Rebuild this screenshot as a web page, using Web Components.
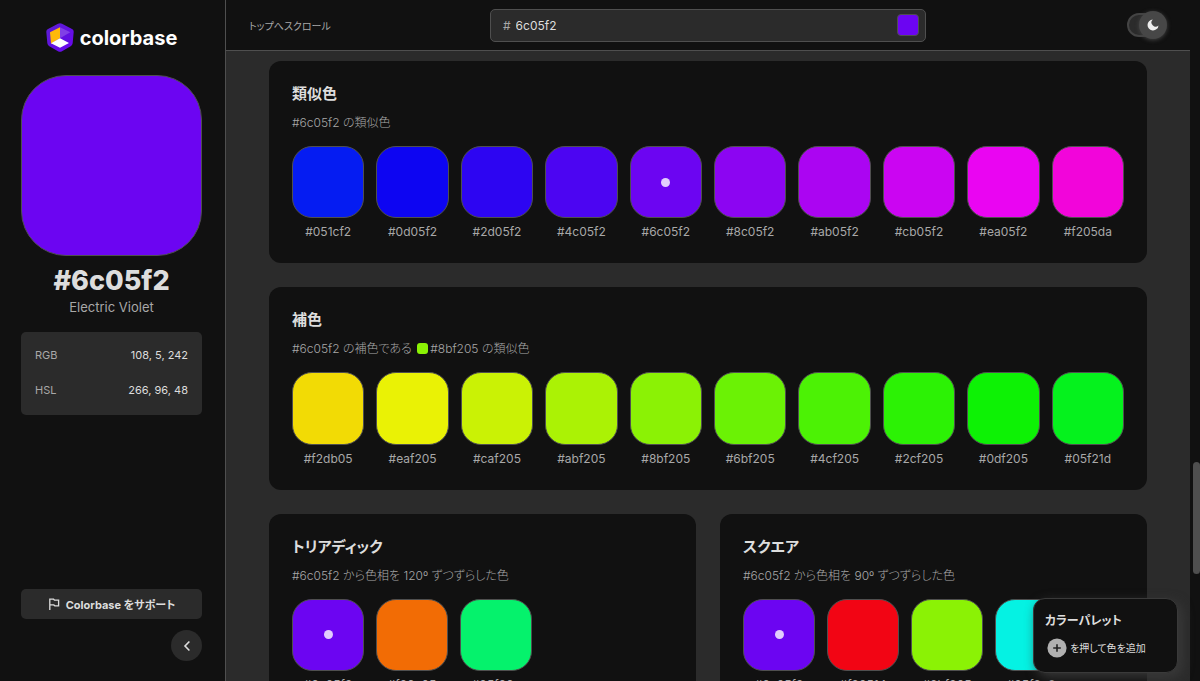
<!DOCTYPE html>
<html lang="ja">
<head>
<meta charset="utf-8">
<meta name="viewport" content="width=device-width, initial-scale=1">
<title>#6c05f2 | Colorbase</title>
<style>
  :root {
    --ink: #111111;
    --panel: #2b2b2b;
    --line: #4f4f4f;
    --text: #dddddd;
    --muted: #a8a8a8;
  }
  body {
    margin: 0;
    background: var(--ink);
    color: var(--text);
    font-family: Inter, "Noto Sans CJK JP", sans-serif;
    font-size: 12px;
    font-feature-settings: "palt";
  }
</style>
</head>
<body>
<cb-app>
  <cb-sidebar slot="sidebar" hex="#6c05f2" name="Electric Violet" rgb="108, 5, 242" hsl="266, 96, 48"></cb-sidebar>
  <cb-header slot="header" value="6c05f2"></cb-header>
  <cb-card wide heading="類似色">
    <span slot="note">#6c05f2 の類似色</span>
    <cb-swatches columns="10" current="#6c05f2" colors="#051cf2 #0d05f2 #2d05f2 #4c05f2 #6c05f2 #8c05f2 #ab05f2 #cb05f2 #ea05f2 #f205da"></cb-swatches>
  </cb-card>
  <cb-card wide heading="補色">
    <span slot="note">#6c05f2 の補色である <cb-chip color="#8bf205"></cb-chip>#8bf205 の類似色</span>
    <cb-swatches columns="10" colors="#f2db05 #eaf205 #caf205 #abf205 #8bf205 #6bf205 #4cf205 #2cf205 #0df205 #05f21d"></cb-swatches>
  </cb-card>
  <cb-card heading="トリアディック">
    <span slot="note">#6c05f2 から色相を 120º ずつずらした色</span>
    <cb-swatches current="#6c05f2" colors="#6c05f2 #f26c05 #05f26c"></cb-swatches>
  </cb-card>
  <cb-card heading="スクエア">
    <span slot="note">#6c05f2 から色相を 90º ずつずらした色</span>
    <cb-swatches current="#6c05f2" colors="#6c05f2 #f20514 #8bf205 #05f2e3"></cb-swatches>
  </cb-card>
  <cb-palette slot="palette"></cb-palette>
</cb-app>

<script>
const define = (tag, render) => customElements.define(tag, class extends HTMLElement {
  connectedCallback() {
    if (this.shadowRoot) return;
    this.attachShadow({ mode: "open" }).innerHTML = render(this);
  }
});

define("cb-app", () => `
  <style>
    :host { display: grid; grid-template-columns: 226px minmax(0, 1fr) 10px; height: 100vh; overflow: hidden; position: relative; }
    .page { display: grid; grid-template-rows: auto minmax(0, 1fr); min-height: 0; background: var(--panel); }
    main { overflow: hidden; padding: 10px 43px; display: grid; grid-template-columns: 1fr 1fr; gap: 24px; align-content: start; }
    .track { display: grid; grid-template-rows: 462fr 112fr 107fr; padding-left: 3px; }
    .thumb { grid-row: 2; background: var(--line); border-radius: 4px; }
    .float { position: absolute; right: 22px; bottom: 8px; }
  </style>
  <slot name="sidebar"></slot>
  <div class="page"><slot name="header"></slot><main><slot></slot></main></div>
  <div class="track"><div class="thumb"></div></div>
  <div class="float"><slot name="palette"></slot></div>`);

define("cb-logo", () => `
  <style>
    :host { display: block; }
    a { display: flex; align-items: center; justify-content: center; gap: 6px; color: #fff; text-decoration: none; font-size: 20px; line-height: 28px; font-weight: 700; }
    svg { width: 28px; height: 29px; }
  </style>
  <a href="#"><svg viewBox="0 0 84 87" aria-hidden="true">
    <defs><linearGradient id="g" x1="0" y1="0" x2="1" y2="1"><stop offset="0" stop-color="#5a1fd0"/><stop offset="1" stop-color="#6c05f2"/></linearGradient></defs>
    <path d="M36 2Q42-1 48 2L78 18Q84 21 83 28L80 61Q79 67 74 70L48 85Q42 88 36 85L10 70Q5 67 4 61L1 28Q0 21 6 18Z" fill="url(#g)"/>
    <path d="M42 13L73 28L70 60L42 46Z" fill="#6010e2"/>
    <path d="M42 13L73 28L42 46Z" fill="#8040e6"/>
    <path d="M42 13L12 28L15 62L42 46Z" fill="#ffb90a"/>
    <path d="M42 46L69 60L42 74L15 61Z" fill="#fff"/>
  </svg><span>colorbase</span></a>`);

define("cb-sidebar", el => `
  <style>
    :host { display: flex; flex-direction: column; box-sizing: border-box; padding: 23px 23px 20px 21px; border-right: 1px solid var(--line); background: var(--ink); }
    .hero { margin-top: 23px; aspect-ratio: 1; box-sizing: border-box; border: 1px solid var(--line); border-radius: 45px; }
    h1 { margin: 8px 0 0; font-size: 27px; line-height: 34px; font-weight: 800; text-align: center; }
    p { margin: 0; font-size: 13px; line-height: 18px; text-align: center; color: var(--muted); }
    dl { margin: 16px 0 0; padding: 6px 14px 7px; background: var(--panel); border-radius: 5px; }
    dl div { display: flex; justify-content: space-between; font-size: 11px; line-height: 35px; }
    dt { color: var(--muted); }
    dd { margin: 0; }
    .bottom { margin-top: auto; display: flex; flex-direction: column; gap: 11px; align-items: flex-end; }
    .support { display: flex; align-items: center; justify-content: center; gap: 6px; align-self: stretch; height: 30px; background: var(--panel); border-radius: 5px; color: var(--text); font-size: 11px; font-weight: 700; text-decoration: none; }
    .support svg { width: 12px; height: 12px; }
    button { display: grid; place-items: center; width: 31px; height: 31px; padding: 0; border: 0; border-radius: 50%; background: var(--panel); color: var(--text); }
    button svg { width: 10px; height: 12px; }
  </style>
  <cb-logo></cb-logo>
  <div class="hero" style="background:${el.getAttribute("hex")}"></div>
  <h1>${el.getAttribute("hex")}</h1>
  <p>${el.getAttribute("name")}</p>
  <dl>
    <div><dt>RGB</dt><dd>${el.getAttribute("rgb")}</dd></div>
    <div><dt>HSL</dt><dd>${el.getAttribute("hsl")}</dd></div>
  </dl>
  <div class="bottom">
    <a class="support" href="#"><svg viewBox="0 0 12 12" fill="none" stroke="currentColor" stroke-width="1.3" aria-hidden="true"><path d="M1.8 12V1.2H5.6L6.5 2.2H10.6V7.8H6.8L5.8 6.9H1.8"/></svg><span>Colorbase をサポート</span></a>
    <button type="button" aria-label="閉じる"><svg viewBox="0 0 10 12" fill="none" stroke="currentColor" stroke-width="1.6" aria-hidden="true"><path d="M7.4 1.5L3 6L7.4 10.5"/></svg></button>
  </div>`);

define("cb-header", el => `
  <style>
    :host { display: grid; grid-template-columns: 1fr minmax(0, 436px) 1fr; align-items: center; height: 50px; padding: 0 23px; background: var(--ink); border-bottom: 1px solid var(--line); }
    .top { color: var(--muted); font-size: 10px; text-decoration: none; }
    .search { display: flex; align-items: center; gap: 5px; box-sizing: border-box; height: 33px; padding: 0 6px 0 12px; background: var(--panel); border: 1px solid var(--line); border-radius: 5px; }
    .search label { color: var(--muted); }
    .search input { flex: 1; min-width: 0; padding: 0; border: 0; outline: 0; background: none; color: var(--text); font: inherit; }
    .search button { width: 22px; height: 22px; padding: 0; border: 1px solid var(--line); border-radius: 4px; background: #${el.getAttribute("value")}; }
    .theme { justify-self: end; position: relative; width: 40px; height: 28px; display: flex; align-items: center; }
    .theme input { appearance: none; margin: 0; box-sizing: border-box; width: 38px; height: 24px; border: 2px solid #444; border-radius: 12px; background: #2b2b2b; }
    .knob { position: absolute; right: 0; top: 0; width: 28px; height: 28px; border-radius: 50%; background: #474747; box-shadow: 0 1px 4px #444; display: grid; place-items: center; }
    .knob svg { width: 12px; height: 12px; }
  </style>
  <a class="top" href="#">トップへスクロール</a>
  <div class="search">
    <label for="hex">#</label>
    <input id="hex" type="text" value="${el.getAttribute("value")}">
    <button type="button" aria-label="色を選択"></button>
  </div>
  <label class="theme"><input type="checkbox" checked aria-label="ダークモード">
    <span class="knob"><svg viewBox="0 0 12 12" aria-hidden="true"><path d="M5.8 .5A5.5 5.5 0 1 0 11.5 6.4A3.3 3.3 0 0 1 5.8 .5Z" fill="#eee"/></svg></span>
  </label>`);

define("cb-card", el => `
  <style>
    :host { display: block; padding: 23px 23px 21px; background: var(--ink); border-radius: 12px; }
    :host([wide]) { grid-column: 1 / -1; }
    h2 { margin: 0; font-size: 15px; line-height: 20px; font-weight: 700; }
    p { margin: 9px 0 13px; line-height: 20px; height: 20px; color: var(--muted); font-weight: 300; }
  </style>
  <h2>${el.getAttribute("heading")}</h2>
  <p><slot name="note"></slot></p>
  <slot></slot>`);

define("cb-chip", el => `
  <style>
    :host { display: inline-block; width: 11px; height: 11px; margin: 0 2px; border-radius: 3px; vertical-align: -1px; background: ${el.getAttribute("color")}; }
  </style>`);

define("cb-swatches", el => {
  const columns = el.getAttribute("columns");
  const current = el.getAttribute("current");
  const items = el.getAttribute("colors").split(" ").map(color => `
    <button type="button"><i class="${color === current ? "current" : ""}" style="background:${color}"></i><span>${color}</span></button>`).join("");
  return `
  <style>
    :host { display: grid; gap: 12px; grid-template-columns: ${columns ? `repeat(${columns}, minmax(0, 1fr))` : "repeat(auto-fill, 72px)"}; }
    button { display: block; padding: 0; border: 0; background: none; color: var(--muted); font: inherit; text-align: center; }
    i { display: grid; place-items: center; box-sizing: border-box; aspect-ratio: 1; border: 1px solid var(--line); border-radius: 20px; }
    .current::after { content: ""; width: 9px; height: 9px; border-radius: 50%; background: #e2cdfd; }
    span { display: block; margin-top: 4px; line-height: 20px; }
  </style>${items}`;
});

define("cb-palette", () => `
  <style>
    :host { display: block; box-sizing: border-box; width: 145px; padding: 12px 11px 14px; background: var(--ink); border: 1px solid #3a3a3a; border-radius: 12px; box-shadow: 4px 4px 12px #3a3a3a; }
    h2 { margin: 0 0 7px; font-size: 12px; line-height: 20px; font-weight: 700; }
    p { margin: 0; display: flex; align-items: center; gap: 3px; padding-left: 2px; font-size: 10px; line-height: 20px; }
    svg { width: 20px; height: 20px; flex: none; }
  </style>
  <h2>カラーパレット</h2>
  <p><svg viewBox="0 0 20 20" aria-hidden="true"><circle cx="10" cy="10" r="9.6" fill="#b0b0b0"/><path d="M10 6.2V13.8M6.2 10H13.8" stroke="#222" stroke-width="1.6"/></svg><span>を押して色を追加</span></p>`);
</script>
</body>
</html>
